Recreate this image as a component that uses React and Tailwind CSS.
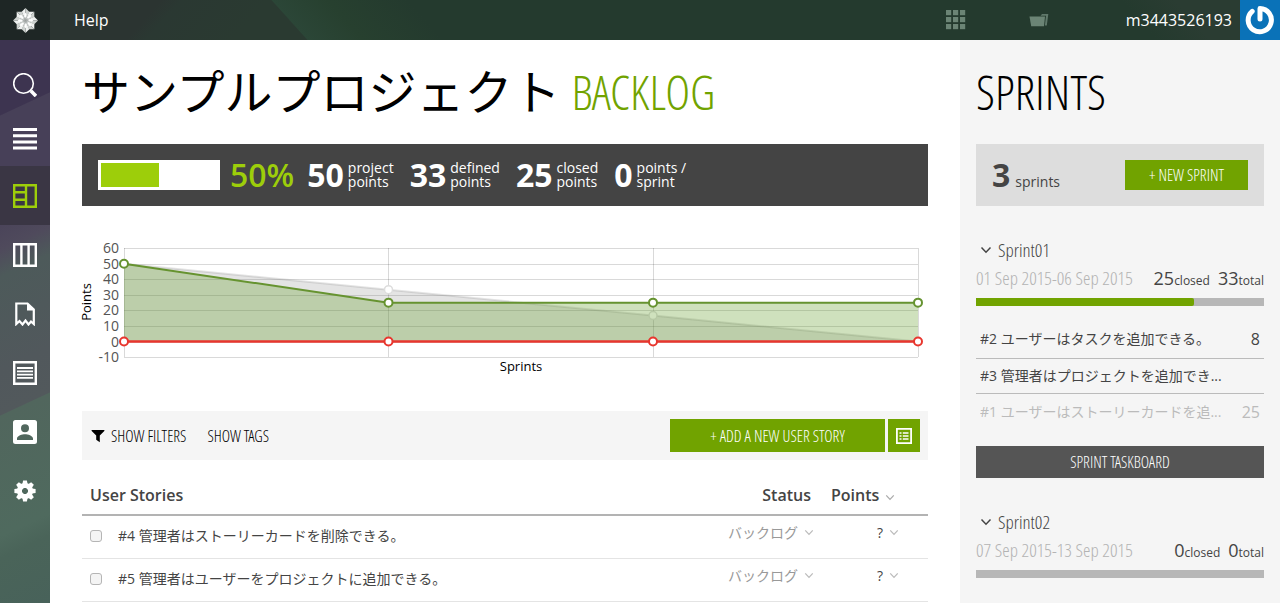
const COND =
  "font-['Open_Sans_Condensed_Light','Open_Sans_Condensed','Noto_Sans_ExtraCondensed_Light','Noto_Sans_ExtraCondensed','Noto_Sans_Condensed_Light','Liberation_Sans_Narrow','Open_Sans','Noto_Sans_CJK_JP',sans-serif]";

function Chevron({ className }) {
  return (
    <svg viewBox="0 0 12 8" className={className} fill="none" stroke="currentColor" strokeWidth="1.5" aria-hidden="true">
      <path d="M1.5 1.5 6 6.2 10.5 1.5" />
    </svg>
  );
}

function Logo() {
  const arms = [0, 45, 90, 135, 180, 225, 270, 315];
  return (
    <svg viewBox="-12 -12 24 24" className="size-[25px]" aria-hidden="true">
      {arms.map((a) => (
        <g key={a} transform={`rotate(${a})`}>
          <path d="M0 0 L-3.6 -8.4 L0 -12 Z" fill="#eef0ef" />
          <path d="M0 0 L3.6 -8.4 L0 -12 Z" fill="#cdd1cf" />
          <path d="M0 -2 L-1.1 -6 L0 -7.500 L1.1 -6 Z" fill="#fff" />
        </g>
      ))}
    </svg>
  );
}

const GEAR_TEETH = [0, 45, 90, 135];

const NAV = [
  {
    label: "Search",
    size: "h-[54px]",
    icon: (
      <g fill="none" stroke="currentColor">
        <circle cx="10.500" cy="10.500" r="9.800" strokeWidth="1.600" />
        <path d="M17.800 17.800 23 23" strokeWidth="3.600" />
      </g>
    ),
  },
  {
    label: "Timeline",
    size: "h-[54px]",
    icon: <path fill="currentColor" d="M0 1h24v3H0zM0 7.200h24v3H0zM0 13.400h24v3H0zM0 19.600h24v3H0z" />,
  },
  {
    label: "Backlog",
    size: "h-[59px]",
    active: true,
    icon: (
      <path fill="none" stroke="currentColor" strokeWidth="2.4" d="M1.200 1.200h21.600v21.600H1.200zM13 1v22M1 8.300h12M1 15.700h12" />
    ),
  },
  {
    label: "Kanban",
    size: "h-[59px]",
    icon: <path fill="none" stroke="currentColor" strokeWidth="2.400" d="M1.200 1.200h21.600v21.600H1.200zM8.400 1v22M15.600 1v22" />,
  },
  {
    label: "Issues",
    size: "h-[59px]",
    icon: (
      <g>
        <path fill="none" stroke="currentColor" strokeWidth="2.200" d="M3.300 1.500H14.500L20.800 7.500V22L18 19.500 15.500 22.500 12.500 18.500 9.500 22.500 6.500 19 3.300 22Z" />
        <path fill="currentColor" d="M14 1v7.500h7.500z" />
      </g>
    ),
  },
  {
    label: "Wiki",
    size: "h-[59px]",
    icon: (
      <g fill="none" stroke="currentColor">
        <path strokeWidth="2.400" d="M1.200 1.200h21.600v21.600H1.200z" />
        <path strokeWidth="1.800" d="M4 7h16M4 10.300h16M4 13.600h16M4 16.900h16" />
      </g>
    ),
  },
  {
    label: "Team",
    size: "h-[59px]",
    icon: (
      <path
        fill="currentColor"
        fillRule="evenodd"
        d="M2.500 0h19A2.500 2.500 0 0 1 24 2.500v19a2.500 2.500 0 0 1-2.500 2.500h-19A2.500 2.500 0 0 1 0 21.500v-19A2.500 2.500 0 0 1 2.500 0zM12 4.200a4 4 0 1 0 0 8 4 4 0 0 0 0-8zM4 20h16v-1.500c0-2.800-5.300-4.300-8-4.300s-8 1.500-8 4.300z"
      />
    ),
  },
  {
    label: "Settings",
    size: "h-[59px]",
    icon: (
      <g transform="translate(12 12)">
        <g fill="currentColor">
          {GEAR_TEETH.map((a) => (
            <path key={a} transform={`rotate(${a})`} d="M-2.600 -7 L-1.900 -10.600 H1.900 L2.600 -7 V7 L1.900 10.600 H-1.900 L-2.600 7 Z M-2.600 -3 V3 H2.600 V-3 Z" fillRule="evenodd" />
          ))}
        </g>
        <circle r="5.600" fill="none" stroke="currentColor" strokeWidth="4.800" />
      </g>
    ),
  },
];

function TopBar() {
  return (
    <header className="flex h-10 items-stretch bg-[#243a2e] bg-[linear-gradient(132deg,#2b3431_0,#2b3431_120px,#2a3832_135px,#2a3a31_200px,transparent_201px),linear-gradient(48deg,#2a3a31_0,#2a3a31_228px,#2b4637_229px,#27402f_270px,#243a2e_330px,#243a2e_860px,#2a3c32_900px)] text-white">
      <a href="#home" aria-label="Home" className="flex w-[50px] items-center justify-center bg-[#1e2625]">
        <Logo />
      </a>
      <nav className="flex flex-1 items-center px-6">
        <a href="#help" className="text-base">Help</a>
      </nav>
      <div className="flex items-center">
        <button type="button" aria-label="Apps" className="mr-[63px] text-[#6b8475]">
          <svg viewBox="0 0 20 20" className="size-5" fill="currentColor" aria-hidden="true">
            {[0, 7, 14].map((y) => [0, 7, 14].map((x) => <rect key={`${x}-${y}`} x={x} y={y} width="5.200" height="5.200" />))}
          </svg>
        </button>
        <button type="button" aria-label="Projects" className="mr-[77px] text-[#6b8475]">
          <svg viewBox="0 0 20 16" className="h-4 w-5" fill="currentColor" aria-hidden="true">
            <path d="M.5 4.500h15.500l-1 9.800H2.200z" />
            <path d="M11.500 3.700 13 2h6.300L17.800 13.500h-1.900L17 3.700z" opacity=".85" />
          </svg>
        </button>
        <a href="#profile" className="mr-2 text-base">m3443526193</a>
      </div>
      <a href="#account" aria-label="Account" className="flex w-10 items-center justify-center bg-[#0a72b8]">
        <svg viewBox="0 0 30 30" className="size-[30px]" fill="none" stroke="#fff" strokeWidth="5" strokeLinecap="round" aria-hidden="true">
          <path d="M7.200 6.300A11.600 11.600 0 1 0 15 3.500V14" strokeLinejoin="round" />
        </svg>
      </a>
    </header>
  );
}

function SideNav() {
  return (
    <nav
      aria-label="Project"
      className="w-[50px] shrink-0 bg-[linear-gradient(155deg,#3d3450_0,#3d3450_68px,#474058_69px,#474058_150px,#4f4a5c_190px,#4d5a5a_215px,#51585c_300px,#52595c_340px,#51665d_341px,#4f6a5e_450px,#4a6459_470px,#48625a_100%)] pt-[18px] text-white"
    >
      {NAV.map((n) => (
        <a
          key={n.label}
          href={`#${n.label.toLowerCase()}`}
          aria-label={n.label}
          className={`flex items-center justify-center ${n.size} ${n.active ? "bg-[#3a3644] text-[#9dce0a]" : ""}`}
        >
          <svg viewBox="0 0 24 24" className="size-6" aria-hidden="true">{n.icon}</svg>
        </a>
      ))}
    </nav>
  );
}

const STATS = [
  ["50", "project", "points"],
  ["33", "defined", "points"],
  ["25", "closed", "points"],
  ["0", "points /", "sprint"],
];

function Summary() {
  return (
    <section className="flex h-[62px] items-center bg-[#444] px-4 text-white">
      <div className="h-[30px] w-[122px] bg-white p-[3px]">
        <div className="h-full w-1/2 bg-[#9dce0a]" />
      </div>
      <span className="ml-[10px] text-[32px] font-semibold text-[#9dce0a]">50%</span>
      <div className="ml-[13px] flex gap-4">
        {STATS.map(([n, a, b]) => (
          <div key={a} className="flex items-center gap-1">
            <span className="text-[32px] font-bold">{n}</span>
            <span className="text-sm leading-[14px]">
              {a}
              <br />
              {b}
            </span>
          </div>
        ))}
      </div>
    </section>
  );
}

const X = [42, 306.500, 571, 836];
const yOf = (v) => 101.500 - v * 1.555;

function Chart() {
  const ideal = [50, 33.300, 16.700, 0];
  const real = [50, 25, 25, 25];
  const pts = (a) => a.map((v, i) => `${X[i]},${yOf(v)}`).join(" ");
  return (
    <svg viewBox="0 0 846 140" className="mt-[34px] block w-full overflow-visible" role="img" aria-label="Points per sprint">
      <g stroke="#000" strokeOpacity=".15">
        {[60, 50, 40, 30, 20, 10, 0, -10].map((v) => (
          <line key={v} x1="42" x2="836" y1={Math.round(yOf(v)) + 0.500} y2={Math.round(yOf(v)) + 0.500} />
        ))}
        {X.map((x) => (
          <line key={x} x1={Math.floor(x) + 0.500} x2={Math.floor(x) + 0.500} y1="8" y2="117" />
        ))}
      </g>
      <polygon points={`${pts(ideal)} 42,101.500`} fill="#777" fillOpacity=".2" />
      <polyline points={pts(ideal)} fill="none" stroke="#777" strokeOpacity=".2" strokeWidth="2" />
      {X.slice(1, 3).map((x, i) => (
        <circle key={x} cx={x} cy={yOf(ideal[i + 1])} r="4" fill="#fff" stroke="#ddd" strokeWidth="1.500" />
      ))}
      <polygon points={`${pts(real)} 836,101.500 42,101.500`} fill="#5f9b25" fillOpacity=".3" />
      <polyline points={pts(real)} fill="none" stroke="#669330" strokeWidth="2" />
      <line x1="42" x2="836" y1="101.500" y2="101.500" stroke="#e8362e" strokeWidth="2.400" />
      {X.map((x, i) => (
        <g key={x} fill="#fff" strokeWidth="2">
          <circle cx={x} cy={yOf(real[i])} r="4" stroke="#669330" />
          <circle cx={x} cy="101.500" r="4" stroke="#e8362e" />
        </g>
      ))}
      <g className="fill-[#545454] text-sm" textAnchor="end">
        {[60, 50, 40, 30, 20, 10, 0, -10].map((v) => (
          <text key={v} x="37" y={Math.round(yOf(v)) + 5}>{v}</text>
        ))}
      </g>
      <g className="fill-black text-[13px]" textAnchor="middle">
        <text x="439" y="131">Sprints</text>
        <text transform="translate(9 62) rotate(-90)">Points</text>
      </g>
    </svg>
  );
}

function Toolbar() {
  return (
    <div className={`mt-[31px] flex h-[49px] items-center bg-[#f5f5f5] px-2 text-base ${COND}`}>
      <button type="button" className="ml-px flex items-center gap-[6px] text-black">
        <svg viewBox="0 0 14 14" className="size-[14px]" fill="#000" aria-hidden="true">
          <path d="M.8 1h12.400q.6.400.1 1L8.800 6.600V13.200L5.200 10.800V6.600L.7 2Q.2 1.400.8 1z" />
        </svg>
        SHOW FILTERS
      </button>
      <button type="button" className="ml-[21px] text-black">SHOW TAGS</button>
      <button type="button" className="ml-auto h-[33px] w-[215px] bg-[#71a300] text-white">+ ADD A NEW USER STORY</button>
      <button type="button" aria-label="Bulk add" className="ml-[3px] flex h-[33px] w-8 items-center justify-center bg-[#71a300] text-white">
        <svg viewBox="0 0 16 16" className="size-4" fill="none" stroke="currentColor" aria-hidden="true">
          <path strokeWidth="1.800" d="M.9.900h14.200v14.200H.9z" />
          <path strokeWidth="1.500" d="M3.500 5h2M6.800 5h5.700M3.500 8h2M6.800 8h5.700M3.500 11h2M6.800 11h5.700" />
        </svg>
      </button>
    </div>
  );
}

const STORIES = [
  ["#4", "管理者はストーリーカードを削除できる。"],
  ["#5", "管理者はユーザーをプロジェクトに追加できる。"],
];

function Stories() {
  return (
    <table className="mt-3 w-full border-collapse text-sm text-[#444]">
      <thead>
        <tr className="h-[43px] border-b-2 border-[#b3b3b3] text-left text-base">
          <th scope="col" className="pt-1 pl-2 font-semibold">User Stories</th>
          <th scope="col" className="w-[118px] pt-1 pr-5 text-right font-semibold">Status</th>
          <th scope="col" className="w-[97px] pt-1 font-semibold">
            <button type="button" className="flex items-center gap-[6px]">
              Points
              <Chevron className="mt-1 h-[7px] w-[10px] text-[#aaa]" />
            </button>
          </th>
        </tr>
      </thead>
      <tbody>
        {STORIES.map(([id, name]) => (
          <tr key={id} className="h-[43px] border-b border-[#e4e4e4]">
            <td className="pb-0.5 pl-2">
              <label className="flex items-center gap-4">
                <input type="checkbox" className="size-3 appearance-none rounded-[3px] border border-[#b5b5b5] bg-[#f4f4f4]" />
                <span><a href={`#us${id.slice(1)}`}>{id} {name}</a></span>
              </label>
            </td>
            <td className="pr-[17px] pb-2">
              <button type="button" className="ml-auto flex items-center gap-[6px] text-[#999]">
                バックログ
                <Chevron className="h-[7px] w-[10px] text-[#bbb]" />
              </button>
            </td>
            <td className="pb-2">
              <button type="button" className="ml-[46px] flex items-center gap-[6px]">
                ?
                <Chevron className="h-[7px] w-[10px] text-[#bbb]" />
              </button>
            </td>
          </tr>
        ))}
      </tbody>
    </table>
  );
}

function SprintHead({ name, dates, closed, total, progress }) {
  return (
    <>
      <button type="button" className={`flex h-7 items-center gap-[6px] pl-1 text-[19px] text-[#444] ${COND}`}>
        <Chevron className="h-2 w-3" />
        {name}
      </button>
      <div className="flex h-7 items-baseline whitespace-nowrap text-[#444]">
        <span className={`flex-1 text-[19px] text-[#b3b3b3] ${COND}`}>{dates}</span>
        <span className="text-lg">{closed}</span>
        <span className="text-xs">closed</span>
        <span className="ml-2 text-lg">{total}</span>
        <span className="text-xs">total</span>
      </div>
      <div className="mt-[6px] h-2 bg-[#b7b7b7]">
        <div className="h-full rounded-r-xs bg-[#71a300]" style={{ width: `${progress}%` }} />
      </div>
    </>
  );
}

const SPRINT_ITEMS = [
  ["#2 ユーザーはタスクを追加できる。", "8", "h-[40px] border-b border-[#bbb]"],
  ["#3 管理者はプロジェクトを追加でき...", "", "h-[35px] border-b border-[#bbb]"],
  ["#1 ユーザーはストーリーカードを追...", "25", "h-[36px] text-[#bbb]"],
];

function Sprints() {
  return (
    <aside className="w-1/4 shrink-0 bg-[#f5f5f5] px-4">
      <h2 className={`flex h-[104px] items-center text-5xl ${COND}`}>SPRINTS</h2>
      <div className="flex h-[62px] items-center bg-[#ddd] px-4 text-[#444]">
        <p className="flex flex-1 items-baseline gap-[5px]">
          <span className="text-[32px] font-bold">3</span>
          <span className="text-sm">sprints</span>
        </p>
        <button type="button" className={`h-[30px] w-[123px] bg-[#71a300] text-base text-white ${COND}`}>+ NEW SPRINT</button>
      </div>
      <section className="mt-[30px]">
        <SprintHead name="Sprint01" dates="01 Sep 2015-06 Sep 2015" closed="25" total="33" progress={75.700} />
        <ul className="mt-[13px] text-sm text-[#444]">
          {SPRINT_ITEMS.map(([t, p, c]) => (
            <li key={t} className={`flex items-center px-1 ${c}`}>
              <a href="#story" className="truncate">{t}</a>
              <span className="ml-auto text-base">{p}</span>
            </li>
          ))}
        </ul>
        <a href="#taskboard" className={`mt-[16px] flex h-8 items-center justify-center bg-[#555] text-base text-white ${COND}`}>SPRINT TASKBOARD</a>
      </section>
      <section className="mt-[30px]">
        <SprintHead name="Sprint02" dates="07 Sep 2015-13 Sep 2015" closed="0" total="0" progress={0} />
      </section>
    </aside>
  );
}

export default function App() {
  return (
    <div lang="ja" className="flex min-h-screen flex-col bg-white font-['Open_Sans','Noto_Sans_CJK_JP',sans-serif]">
      <TopBar />
      <div className="flex flex-1">
        <SideNav />
        <main className="min-w-0 flex-1 px-8">
          <h1 className={`flex h-[104px] items-center gap-[11px] whitespace-nowrap text-5xl ${COND}`}>
            <span>サンプルプロジェクト</span>
            <span className="text-[#71a300]">BACKLOG</span>
          </h1>
          <Summary />
          <Chart />
          <Toolbar />
          <Stories />
        </main>
        <Sprints />
      </div>
    </div>
  );
}
